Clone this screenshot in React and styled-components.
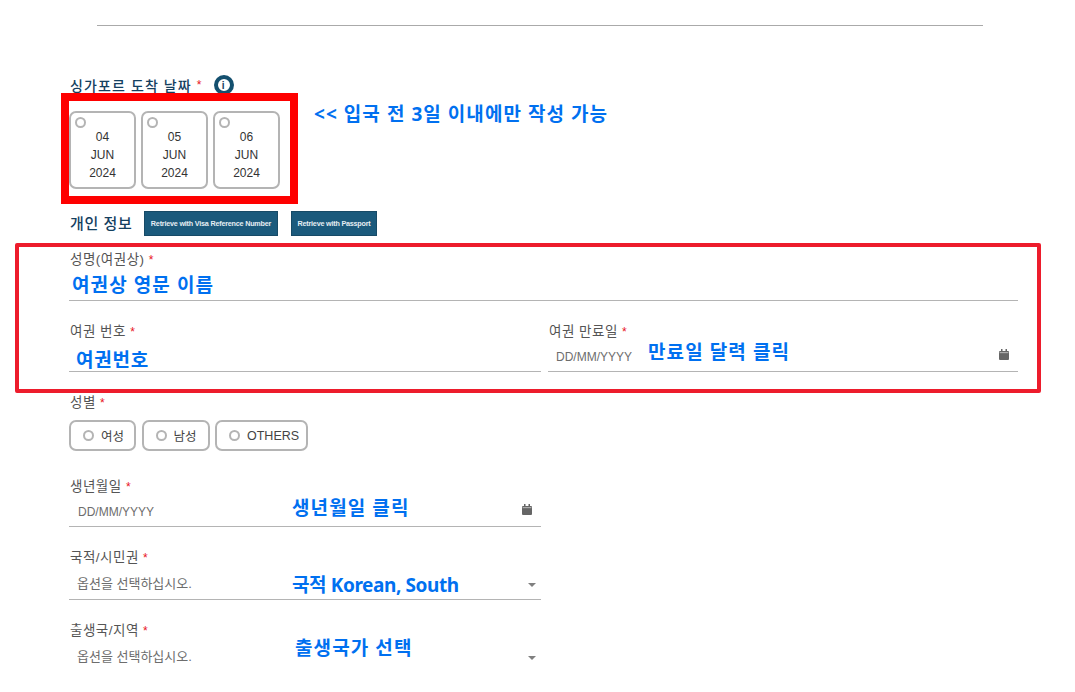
import React from 'react';
import styled, { createGlobalStyle } from 'styled-components';

const GlobalStyle = createGlobalStyle`
  html, body {
    margin: 0;
    padding: 0;
    background: #fff;
    font-family: "Liberation Sans", "Noto Sans CJK KR", sans-serif;
  }
`;

const dateOptions = ['04', '05', '06'];

const App = () => (
  <Page>
    <GlobalStyle />
    <TopRule />
    <Form>
      <ArrivalLabel>
        싱가포르 도착 날짜 <Star>*</Star>
        <InfoBadge>i</InfoBadge>
      </ArrivalLabel>
      <DateRow>
        {dateOptions.map((day) => (
          <DateCard key={day}>
            <CardRadio />
            <span>{day}</span>
            <span>JUN</span>
            <span>2024</span>
          </DateCard>
        ))}
      </DateRow>
      <SectionRow>
        <SectionTitle>개인 정보</SectionTitle>
        <RetrieveButton $width={134}>Retrieve with Visa Reference Number</RetrieveButton>
        <RetrieveButton $width={86}>Retrieve with Passport</RetrieveButton>
      </SectionRow>

      <Field $top={15} $height={50}>
        <FieldLabel>성명(여권상) <Star>*</Star></FieldLabel>
      </Field>
      <TwoColumns>
        <Field $height={49}>
          <FieldLabel>여권 번호 <Star>*</Star></FieldLabel>
        </Field>
        <Field $height={49}>
          <FieldLabel>여권 만료일 <Star>*</Star></FieldLabel>
          <FieldValue $top={1}>DD/MM/YYYY</FieldValue>
          <CalendarIcon />
        </Field>
      </TwoColumns>

      <GenderBlock>
        <FieldLabel>성별 <Star>*</Star></FieldLabel>
        <PillRow>
          <Pill $width={67}><PillRadio />여성</Pill>
          <Pill $width={68}><PillRadio />남성</Pill>
          <Pill $width={93}><PillRadio />OTHERS</Pill>
        </PillRow>
      </GenderBlock>

      <HalfColumn>
        <Field $top={27} $height={49}>
          <FieldLabel>생년월일 <Star>*</Star></FieldLabel>
          <FieldValue $left={9} $top={1}>DD/MM/YYYY</FieldValue>
          <CalendarIcon />
        </Field>
        <Field $top={22} $height={51}>
          <FieldLabel>국적/시민권 <Star>*</Star></FieldLabel>
          <FieldValue $left={8} $top={2} $size={13}>옵션을 선택하십시오.</FieldValue>
          <Caret />
        </Field>
        <Field $top={22} $height={51} $plain>
          <FieldLabel>출생국/지역 <Star>*</Star></FieldLabel>
          <FieldValue $left={8} $top={2} $size={13}>옵션을 선택하십시오.</FieldValue>
          <Caret />
        </Field>
      </HalfColumn>
    </Form>

    <ThickMark />
    <ThinMark />
    <Note $x={314} $y={101} $spacing={1.05}>&lt;&lt; 입국 전 3일 이내에만 작성 가능</Note>
    <Note $x={72} $y={272}>여권상 영문 이름</Note>
    <Note $x={76} $y={347} $spacing={0.8}>여권번호</Note>
    <Note $x={648} $y={339}>만료일 달력 클릭</Note>
    <Note $x={292} $y={495}>생년월일 클릭</Note>
    <Note $x={292} $y={572} $spacing={-0.4}>국적 Korean, South</Note>
    <Note $x={295} $y={635}>출생국가 선택</Note>
  </Page>
);

const CalendarIcon = () => (
  <CalendarSvg viewBox="0 0 10 11" aria-hidden="true">
    <rect x="0" y="2" width="10" height="9" rx="1" fill="#666" />
    <rect x="2" y="0" width="1.5" height="3" fill="#666" />
    <rect x="6.5" y="0" width="1.5" height="3" fill="#666" />
    <rect x="0.6" y="3.4" width="8.8" height="0.7" fill="#ddd" />
  </CalendarSvg>
);

// Styles
const Page = styled.div`
  position: relative;
  width: 1075px;
  height: 692px;
  overflow: hidden;
  background: #fff;
`;

const TopRule = styled.div`
  height: 1px;
  margin: 25px 92px 0 97px;
  background: #aaa;
`;

const Form = styled.div`
  padding: 49px 57px 0 69px;
`;

const ArrivalLabel = styled.div`
  display: flex;
  align-items: center;
  gap: 5px;
  height: 20px;
  padding-left: 1px;
  font-size: 14px;
  font-weight: 500;
  letter-spacing: 1.1px;
  color: #14405f;
`;

const Star = styled.span`
  color: #e8141c;
  font-size: 12px;
`;

const InfoBadge = styled.span`
  display: flex;
  align-items: center;
  justify-content: center;
  box-sizing: border-box;
  width: 20px;
  height: 20px;
  margin: 0 0 0 6px;
  border: 4px solid #14506f;
  border-radius: 50%;
  font-size: 10px;
  font-weight: 700;
  color: #14405f;
`;

const DateRow = styled.div`
  display: flex;
  gap: 5px;
  margin-top: 16px;
`;

const DateCard = styled.div`
  position: relative;
  display: flex;
  flex-direction: column;
  align-items: center;
  justify-content: flex-end;
  box-sizing: border-box;
  width: 67px;
  height: 78px;
  padding-bottom: 5px;
  border: 2px solid #b4b4b4;
  border-radius: 7px;
  font-size: 12px;
  line-height: 18px;
  color: #333;
`;

const CardRadio = styled.i`
  position: absolute;
  top: 4px;
  left: 4px;
  box-sizing: border-box;
  width: 11px;
  height: 11px;
  border: 2px solid #b4b4b4;
  border-radius: 50%;
`;

const SectionRow = styled.div`
  display: flex;
  align-items: center;
  height: 25px;
  margin-top: 22px;
`;

const SectionTitle = styled.div`
  width: 75px;
  padding: 0 0 3px 1px;
  box-sizing: border-box;
  font-size: 15px;
  font-weight: 500;
  letter-spacing: 0.6px;
  white-space: nowrap;
  color: #14405f;
`;

const RetrieveButton = styled.button`
  width: ${(props) => props.$width}px;
  height: 25px;
  margin-right: 13px;
  padding: 0;
  border: 1px solid #174a66;
  background: #1b5a7c;
  font-family: inherit;
  font-size: 7.2px;
  font-weight: 700;
  letter-spacing: -0.2px;
  white-space: nowrap;
  color: #e6eef3;
`;

const Field = styled.div`
  position: relative;
  box-sizing: border-box;
  height: ${(props) => props.$height}px;
  margin-top: ${(props) => props.$top || 0}px;
  border-bottom: ${(props) => (props.$plain ? 'none' : '1px solid #b4b4b4')};
`;

const FieldLabel = styled.div`
  height: 18px;
  padding-left: 1px;
  font-size: 13.5px;
  line-height: 18px;
  letter-spacing: 0.5px;
  color: #555;
`;

const FieldValue = styled.div`
  margin: ${(props) => 7 + (props.$top || 0)}px 0 0 ${(props) => props.$left || 8}px;
  font-size: ${(props) => props.$size || 12}px;
  line-height: 16px;
  color: #6d6d6d;
`;

const CalendarSvg = styled.svg`
  position: absolute;
  right: 9px;
  top: 26px;
  width: 10px;
  height: 11px;
`;

const Caret = styled.i`
  position: absolute;
  right: 5px;
  top: 34px;
  border-style: solid;
  border-width: 4px 4px 0;
  border-color: #808080 transparent transparent;
`;

const TwoColumns = styled.div`
  display: grid;
  grid-template-columns: 472px 470px;
  column-gap: 7px;
  margin-top: 22px;
`;

const GenderBlock = styled.div`
  margin-top: 22px;
`;

const PillRow = styled.div`
  display: flex;
  gap: 5.5px;
  margin-top: 8px;
`;

const Pill = styled.div`
  display: flex;
  align-items: center;
  gap: 7px;
  box-sizing: border-box;
  width: ${(props) => props.$width}px;
  height: 31px;
  padding-left: 12px;
  border: 2px solid #b4b4b4;
  border-radius: 7px;
  font-size: 12.5px;
  color: #444;
`;

const PillRadio = styled.i`
  box-sizing: border-box;
  width: 11px;
  height: 11px;
  border: 2px solid #b4b4b4;
  border-radius: 50%;
`;

const HalfColumn = styled.div`
  width: 472px;
`;

const ThickMark = styled.div`
  position: absolute;
  left: 61px;
  top: 93px;
  box-sizing: border-box;
  width: 237px;
  height: 111px;
  border: 8px solid #fe0000;
`;

const ThinMark = styled.div`
  position: absolute;
  left: 15px;
  top: 243px;
  box-sizing: border-box;
  width: 1026px;
  height: 150px;
  border: 4px solid #ed1c2c;
  border-radius: 2px;
`;

const Note = styled.div`
  position: absolute;
  left: ${(props) => props.$x}px;
  top: ${(props) => props.$y}px;
  font-family: "Noto Sans", "Noto Sans CJK KR", sans-serif;
  font-size: 19px;
  font-weight: 700;
  line-height: 26px;
  letter-spacing: ${(props) => (props.$spacing === undefined ? 1.1 : props.$spacing)}px;
  white-space: nowrap;
  color: #0070f0;
`;

export default App;
